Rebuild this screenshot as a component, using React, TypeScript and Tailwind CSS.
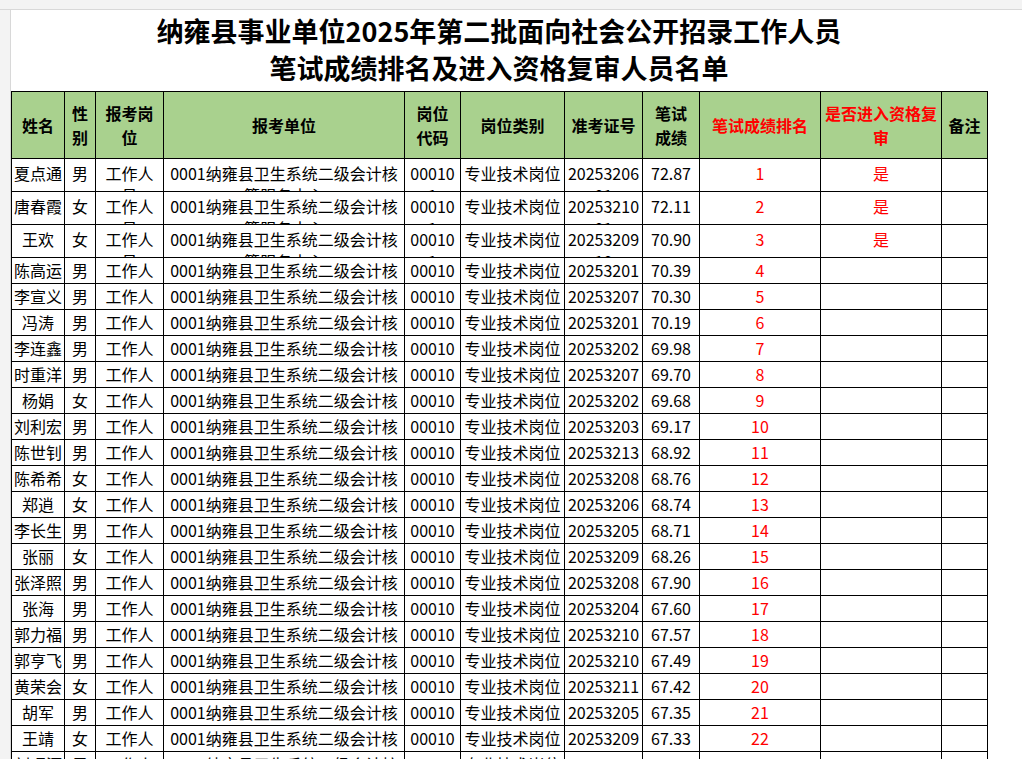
const rows: [string, string, string, string, number][] = [
  ["夏点通", "男", "2025320601", "72.87", 1],
  ["唐春霞", "女", "2025321001", "72.11", 2],
  ["王欢", "女", "2025320910", "70.90", 3],
  ["陈高运", "男", "2025320105", "70.39", 4],
  ["李宣义", "男", "2025320703", "70.30", 5],
  ["冯涛", "男", "2025320112", "70.19", 6],
  ["李连鑫", "男", "2025320206", "69.98", 7],
  ["时重洋", "男", "2025320711", "69.70", 8],
  ["杨娟", "女", "2025320204", "69.68", 9],
  ["刘利宏", "男", "2025320308", "69.17", 10],
  ["陈世钊", "男", "2025321302", "68.92", 11],
  ["陈希希", "女", "2025320815", "68.76", 12],
  ["郑逍", "女", "2025320607", "68.74", 13],
  ["李长生", "男", "2025320509", "68.71", 14],
  ["张丽", "女", "2025320912", "68.26", 15],
  ["张泽照", "男", "2025320803", "67.90", 16],
  ["张海", "男", "2025320410", "67.60", 17],
  ["郭力福", "男", "2025321006", "67.57", 18],
  ["郭亨飞", "男", "2025321014", "67.49", 19],
  ["黄荣会", "女", "2025321102", "67.42", 20],
  ["胡军", "男", "2025320507", "67.35", 21],
  ["王靖", "女", "2025320911", "67.33", 22],
  ["刘昭源", "男", "2025320708", "67.30", 23],
];
const widths = [53, 31, 68, 241, 56, 104, 78, 57, 121, 121, 46];
const font = { fontFamily: '"Noto Sans CJK SC", "Liberation Sans", sans-serif' };

function Cell({ children, w, h, cls = "", pad = 2 }: { children?: React.ReactNode; w: number; h: number; cls?: string; pad?: number }) {
  return (
    <td className={`border border-black p-0 align-top ${cls}`} style={{ width: w }}>
      <div className="overflow-hidden flex justify-center items-start" style={{ height: h - 1 }}>
        <div className="text-center leading-[22px] w-full break-all" style={{ paddingTop: h > 30 ? 3 : 1, paddingLeft: pad, paddingRight: pad }}>{children}</div>
      </div>
    </td>
  );
}

export default function App() {
  return (
    <div className="w-[1022px] h-[759px] overflow-hidden bg-white relative text-black" style={font}>
      <div className="absolute left-0 top-0 w-[11px] h-full bg-[#f3f3f3] border-r border-[#d8d8d8]" />
      <div className="absolute left-0 top-0 w-full h-[10px] bg-[#f3f3f3] border-b border-[#d8d8d8]" />
      <div className="absolute left-[11px] top-[10px]">
        <div className="w-[976px] h-[81px] flex flex-col items-center justify-center font-bold text-[27px] leading-[37px] pb-[4px]">
          <div>纳雍县事业单位2025年第二批面向社会公开招录工作人员</div>
          <div>笔试成绩排名及进入资格复审人员名单</div>
        </div>
        <table className="border-collapse table-fixed text-[16px]" style={{ width: 976 }}>
          <thead>
            <tr className="bg-[#a9d18e] font-bold">
              {["姓名", "性别", "报考岗位", "报考单位", "岗位代码", "岗位类别", "准考证号", "笔试成绩", "笔试成绩排名", "是否进入资格复审", "备注"].map((t, i) => (
                <td key={i} className={`border border-black p-0 text-center leading-[24px] ${i === 8 || i === 9 ? "text-[#ff0000]" : ""}`} style={{ width: widths[i], height: 67 }}>
                  <div className={i === 4 || i === 7 ? "px-[10px]" : "px-[2px]"}>{t}</div>
                </td>
              ))}
            </tr>
          </thead>
          <tbody>
            {rows.map((r, i) => {
              const h = i < 3 ? 33 : 26;
              return (
                <tr key={i}>
                  <Cell w={widths[0]} h={h}>{r[0]}</Cell>
                  <Cell w={widths[1]} h={h}>{r[1]}</Cell>
                  <Cell w={widths[2]} h={h}>工作人员</Cell>
                  <Cell w={widths[3]} h={h}>0001纳雍县卫生系统二级会计核算服务中心</Cell>
                  <Cell w={widths[4]} h={h} pad={5}>000101</Cell>
                  <Cell w={widths[5]} h={h}>专业技术岗位</Cell>
                  <Cell w={widths[6]} h={h}>{r[2]}</Cell>
                  <Cell w={widths[7]} h={h}>{r[3]}</Cell>
                  <Cell w={widths[8]} h={h} cls="text-[#ff0000]">{r[4]}</Cell>
                  <Cell w={widths[9]} h={h} cls="text-[#ff0000]">{i < 3 ? "是" : ""}</Cell>
                  <Cell w={widths[10]} h={h}></Cell>
                </tr>
              );
            })}
          </tbody>
        </table>
      </div>
    </div>
  );
}
